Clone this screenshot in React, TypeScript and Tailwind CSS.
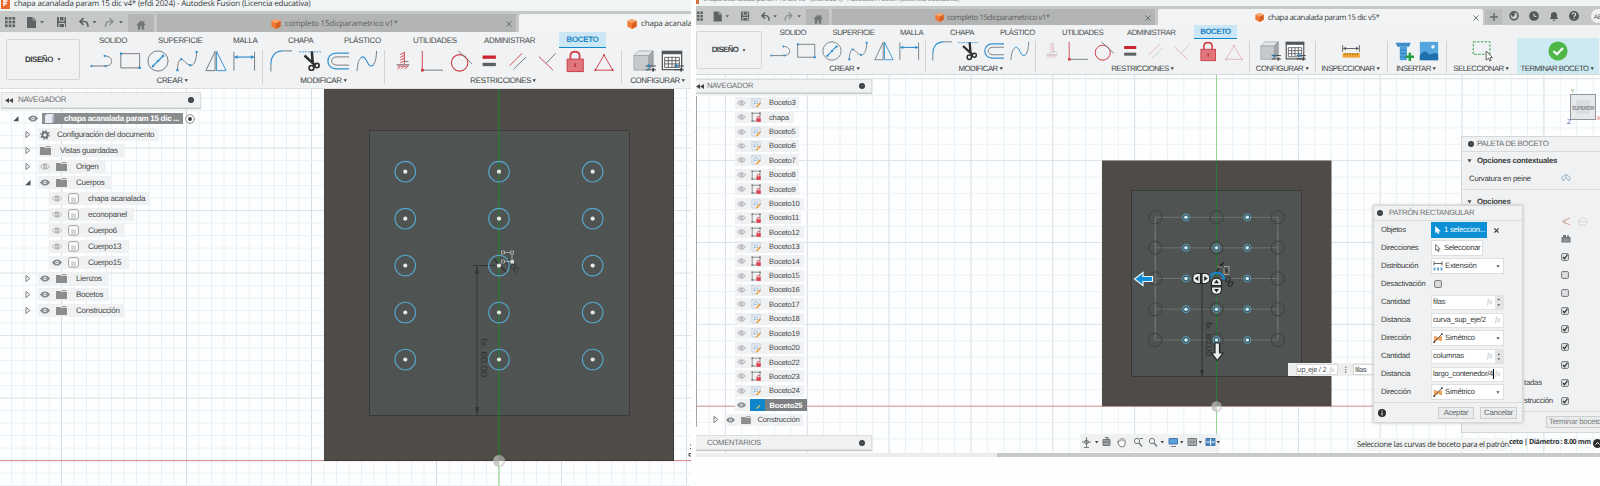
import React from "react";
import type { ReactNode } from "react";

const BLUE = "#2f8fd0";
const GREY = "#6f7275";
const RED = "#cf3a45";

type IconName =
  | "line" | "rect" | "circle" | "spline" | "mirror" | "dim"
  | "fillet" | "trim" | "offset" | "curve"
  | "fix" | "perp" | "tangent" | "equal" | "parallel" | "cross" | "lock" | "triangle"
  | "box" | "table" | "measure" | "bolt" | "image" | "select" | "check";

const drawings: Record<IconName, ReactNode> = {
  line: (
    <>
      <path d="M1 17.5H17C26 17.5 26 6.5 16 6.5" stroke={GREY} />
      <circle cx="1.6" cy="17.5" r="1.2" fill={BLUE} /><circle cx="17" cy="17.5" r="1.2" fill={BLUE} /><circle cx="16" cy="6.5" r="1.2" fill={BLUE} />
    </>
  ),
  rect: (
    <>
      <path d="M2 4H22.5V19.5H2Z" stroke={GREY} />
      <path d="M1 2.8h2.4v2.4H1zM21.3 18.3h2.4v2.4h-2.4z" fill={BLUE} />
    </>
  ),
  circle: (
    <>
      <circle cx="12" cy="12" r="11" stroke={GREY} />
      <path d="M6.5 17.5L17.5 6.5" stroke={BLUE} strokeWidth="1.3" />
      <path d="M5.3 16.4h2.4v2.4H5.3zM10.8 10.8h2.4v2.4h-2.4zM16.3 5.3h2.4v2.4h-2.4z" fill={BLUE} />
    </>
  ),
  spline: (
    <>
      <path d="M1.500 22C2 10 5.500 8 9.500 12.500C16 20 22 18 22.500 2" stroke={GREY} />
      <path d="M.4 20.8h2.4v2.4H.4zM4.500 9h2.200v2.200H4.500zM14.500 15.600h2.200v2.200h-2.200zM21.300 1h2.400v2.400h-2.400z" fill={BLUE} />
    </>
  ),
  mirror: (
    <>
      <path d="M11 1.5V22.5H1Z" stroke={GREY} />
      <path d="M12.6 1.5V22.5H23Z" stroke={BLUE} />
    </>
  ),
  dim: (
    <>
      <path d="M1 2V22.5M23.5 2V22.5" stroke={GREY} />
      <path d="M2 7.7H22.5" stroke={BLUE} strokeWidth="1.3" />
      <path d="M1 7.7l4-2v4zM23.5 7.7l-4-2v4z" fill={BLUE} />
    </>
  ),
  fillet: (
    <>
      <path d="M1 23.5V16M14 1H24" stroke={GREY} />
      <path d="M1 16C1 6 6 1 14 1" stroke={BLUE} strokeWidth="1.3" />
    </>
  ),
  trim: (
    <>
      <path d="M0 2H24" stroke={BLUE} strokeDasharray="2 1.2" />
      <path d="M14 1.5L15 14M6 6L18 17" stroke="#2c2e30" strokeWidth="2.8" />
      <circle cx="13.6" cy="19.5" r="2.6" stroke="#2c2e30" strokeWidth="1.8" />
      <circle cx="19.6" cy="17" r="2.4" stroke="#2c2e30" strokeWidth="1.8" />
    </>
  ),
  offset: (
    <>
      <path d="M24 3.5H10C-2 3.5 -2 20.5 10 20.5H24" stroke={BLUE} strokeWidth="1.4" />
      <path d="M24 7.5H11C3 7.5 3 16.5 11 16.5H24" stroke={GREY} />
    </>
  ),
  curve: (
    <>
      <path d="M1 23C2 16 2 12 5 9M19 16C22 12 22 7 22.5 1" stroke={GREY} />
      <path d="M5 9C9 4 11 12 14 16C16 18 18 18 19 16" stroke={BLUE} strokeWidth="1.2" />
    </>
  ),
  fix: (
    <>
      <path d="M9 5l4-2M9 8l4-2M9 11l4-2M9 14l4-2M6 21l3-3M10 21l3-3M14 21l3-3" stroke={RED} />
      <path d="M13.500 2V15" stroke={RED} />
      <path d="M5 16H19M13 12.5h5" stroke={GREY} />
      <path d="M6 17.6H18" stroke={RED} />
    </>
  ),
  perp: (
    <>
      <path d="M1 22H24" stroke={GREY} />
      <path d="M1.4 1V22" stroke={RED} />
      <rect x="0" y="20.5" width="3" height="3" fill={RED} />
    </>
  ),
  tangent: (
    <>
      <circle cx="10.5" cy="14" r="9" stroke={RED} strokeWidth="1.2" />
      <path d="M9 1L24 15" stroke={GREY} />
    </>
  ),
  equal: (
    <>
      <rect x="5" y="6" width="14.5" height="3.6" fill="#c9252f" />
      <rect x="5" y="14" width="14.5" height="3.6" fill="#5d6063" />
    </>
  ),
  parallel: (
    <>
      <path d="M3 17L16.5 3.5" stroke={RED} />
      <path d="M7 21L21 7.5" stroke={GREY} />
    </>
  ),
  cross: (
    <>
      <path d="M3 7L18.5 22" stroke={RED} />
      <path d="M11 14.5L21.5 3.5" stroke={GREY} />
    </>
  ),
  lock: (
    <>
      <path d="M7 10V6C7 .5 17 .5 17 6V10" stroke="#cf4550" strokeWidth="2" />
      <rect x="3.5" y="10" width="17.5" height="13.5" fill="#e0767c" stroke="#cf4550" strokeWidth="1.2" />
      <path d="M12.2 14.5v4" stroke="#b0202c" strokeWidth="1.3" />
    </>
  ),
  triangle: (
    <>
      <path d="M12 5.5L21.5 22H2.5Z" stroke={RED} />
      <path d="M11 4.5h2v2h-2zM1.5 21h2v2h-2zM20.5 21h2v2h-2z" fill={RED} />
    </>
  ),
  box: (
    <>
      <path d="M1 6L6 1H22L17 6Z" fill="#e3e5e7" stroke="#9b9ea1" strokeWidth=".8" />
      <path d="M17 6L22 1V17L17 22Z" fill="#a4a7aa" stroke="#8b8e91" strokeWidth=".8" />
      <path d="M1 6H17V22H1Z" fill="#c7cacc" stroke="#9b9ea1" strokeWidth=".8" />
      <path d="M14 17.5H25M14 21.5H25" stroke="#45494c" strokeWidth="1.2" />
      <path d="M17 15.5v4" stroke={BLUE} strokeWidth="2" /><path d="M22 19.5v4" stroke="#45494c" strokeWidth="2" />
    </>
  ),
  table: (
    <>
      <path d="M1.5 1.5H22.5V21.5H1.5Z" fill="#fff" stroke="#55585b" strokeWidth="1.4" />
      <path d="M1 1H23V4.6H1Z" fill="#55585b" />
      <path d="M4 8H20V19H4ZM4 11.6H20M4 15.2H20M8 8V19M12 8V19M16 8V19" stroke="#55585b" />
      <path d="M14 17.5H25M14 21.5H25" stroke="#45494c" strokeWidth="1.2" />
      <path d="M17 15.5v4" stroke={BLUE} strokeWidth="2" /><path d="M22 19.5v4" stroke="#45494c" strokeWidth="2" />
    </>
  ),
  measure: (
    <>
      <path d="M2 5V13M22 5V13M3 9H21" stroke="#55585b" strokeWidth="1.1" />
      <path d="M2.5 9l3.5-2v4zM21.5 9l-3.5-2v4z" fill="#55585b" />
      <rect x="2" y="14.5" width="20.5" height="5.5" fill="#efa434" />
      <path d="M5 14.5v2.5M8 14.5v2.5M11 14.5v2.5M14 14.5v2.5M17 14.5v2.5M20 14.5v2.5" stroke="#9c6412" />
    </>
  ),
  bolt: (
    <>
      <path d="M2 2H20L18 7H4Z" fill="#3b8cc8" />
      <path d="M7 7H15.5V23H7Z" fill="#4c9fdb" />
      <path d="M7 11H15.5M7 15H15.5M7 19H15.5" stroke="#2f78b4" strokeWidth=".8" />
      <path d="M19 14V24M14 19H24" stroke="#27a042" strokeWidth="3" />
    </>
  ),
  image: (
    <>
      <path d="M1 1H23V23H1Z" fill="#54a7de" />
      <path d="M1 18C5 11 8 12 11 15C15 19 17 11 23 16V23H1Z" fill="#1f6fac" />
      <circle cx="16.8" cy="7" r="2.2" fill="#e9f5fc" />
    </>
  ),
  select: (
    <>
      <path d="M1.5 1H21.5V16H1.5Z" stroke="#3aa34e" strokeDasharray="3 1.6" strokeWidth="1.2" />
      <path d="M17 12V23L19.6 20.6L21.4 24L23 23.2L21.4 20H24.6Z" fill="#fff" stroke="#333" strokeWidth=".9" />
    </>
  ),
  check: (
    <>
      <circle cx="12" cy="12" r="11.5" fill="#4fb648" />
      <path d="M6.5 12L10.7 16L18 8.5" stroke="#fff" strokeWidth="2.6" />
    </>
  ),
};

function Icon({ name, className }: { name: IconName; className: string }) {
  return (
    <svg viewBox="0 0 24 24" fill="none" className={`overflow-visible ${className}`}>
      {drawings[name]}
    </svg>
  );
}

function Caret({ className = "h-[4px] w-[5px]" }: { className?: string }) {
  return (
    <svg viewBox="0 0 5 4" className={`shrink-0 ${className}`}>
      <path d="M0.5 0.3H4.5L2.5 3.5Z" fill="#444" />
    </svg>
  );
}

function Cube({ className }: { className: string }) {
  return (
    <svg viewBox="0 0 10 10" className={`shrink-0 ${className}`}>
      <path d="M5 0L9.6 2V7.6L5 10L.4 7.6V2Z" fill="#ee7a35" />
      <path d="M5 0L9.6 2L5 4.2L.4 2Z" fill="#f9a96e" />
      <path d="M5 4.2L9.6 2V7.6L5 10Z" fill="#d95f20" />
    </svg>
  );
}

function QuickAccess({ className }: { className: string }) {
  return (
    <svg viewBox="0 0 128 20" className={`shrink-0 ${className}`} fill="none">
      <g fill="#606365">
        {[5, 8.7, 12.4].map((x) => [5, 8.7, 12.4].map((y) => <rect key={`${x}${y}`} x={x} y={y} width="2.7" height="2.7" />))}
        <path d="M27 5H33L36 8V16H27Z" />
        <path d="M40 9h4l-2 2.600zM92.500 9h4l-2 2.600zM119 9h4l-2 2.600z" />
        <path d="M57 5H66V15H57Z" />
      </g>
      <path d="M33 5V8H36" stroke="#c8caca" strokeWidth=".7" />
      <path d="M59.500 5V9H64V5M59 15V11.500H64.500V15" stroke="#c8caca" strokeWidth="1" />
      <path d="M83.500 6L80 9.500L83.500 13M80.500 9.500H84C87 9.500 88 12 88 15" stroke="#5d6062" strokeWidth="1.6" />
      <path d="M109.500 6L113 9.500L109.500 13M112.500 9.500H109C106.500 9.500 105.500 12 105.500 15" stroke="#8e9193" strokeWidth="1.5" />
    </svg>
  );
}

function Home({ className }: { className: string }) {
  return (
    <div className={`flex shrink-0 items-center justify-center rounded-t-[2px] bg-[#b4b6b6] ${className}`}>
      <svg viewBox="0 0 10 10" className="mt-[3px] size-[10px]">
        <path d="M5 .5L.3 5H1.800V9.800H4.200V6.500H5.800V9.800H8.200V5H9.700L8.300 3.600V1H7V2.400Z" fill="#737577" />
      </svg>
    </div>
  );
}

function Close({ className }: { className: string }) {
  return (
    <svg viewBox="0 0 7 7" className={`size-[6px] shrink-0 ${className}`}>
      <path d="M.5 .5L6.500 6.500M6.500 .5L.5 6.500" stroke="#606365" strokeWidth="1" />
    </svg>
  );
}

function Dot({ className = "" }: { className?: string }) {
  return (
    <svg viewBox="0 0 6 6" className={`size-[6px] shrink-0 ${className}`}>
      <circle cx="3" cy="3" r="3" fill="#3c3f41" />
      <path d="M1.500 3H4.500" stroke="#777" strokeWidth=".7" />
    </svg>
  );
}

function Design({ className }: { className: string }) {
  return (
    <div className={`flex shrink-0 items-center justify-center rounded-[2px] border border-[#d3d5d6] bg-[#eff1f2] font-bold text-[#404345] ${className}`}>
      <span>DISEÑO</span>
      <Caret className="ml-[4px] h-[3px] w-[4px]" />
    </div>
  );
}

const tabNames = ["SOLIDO", "SUPERFICIE", "MALLA", "CHAPA", "PLÁSTICO", "UTILIDADES", "ADMINISTRAR"];

function Tabs({ className, activeClass }: { className: string; activeClass: string }) {
  return (
    <div className={`grid items-start whitespace-nowrap text-[#4a4d4f] ${className}`}>
      {tabNames.map((t) => (
        <span key={t}>{t}</span>
      ))}
      <span className={`flex items-center justify-center border-b-[1.500px] border-[#1087cc] bg-[#cbe7f5] font-bold text-[#1a84c4] ${activeClass}`}>
        BOCETO
      </span>
    </div>
  );
}

function Group({
  icons, label, cell, icon, dim = [], className = "", labelClass = "pt-[3px]",
}: {
  icons: IconName[]; label: string; cell: string; icon: string; dim?: IconName[]; className?: string; labelClass?: string;
}) {
  return (
    <div className={`flex shrink-0 flex-col items-center ${className}`}>
      <div className="flex justify-center">
        {icons.map((n) => (
          <span key={n} className={`flex justify-center ${cell} ${dim.includes(n) ? "opacity-35" : ""}`}>
            <Icon name={n} className={icon} />
          </span>
        ))}
      </div>
      <div className={`flex items-center gap-[1.500px] whitespace-nowrap text-[#3f4244] ${labelClass}`}>
        {label}
        <Caret className="h-[3.500px] w-[4.500px]" />
      </div>
    </div>
  );
}

function Sep({ className }: { className: string }) {
  return <div className={`w-px shrink-0 bg-[#d0d2d3] ${className}`} />;
}

const create: IconName[] = ["line", "rect", "circle", "spline", "mirror", "dim"];
const modify: IconName[] = ["fillet", "trim", "offset", "curve"];
const constrain: IconName[] = ["fix", "perp", "tangent", "equal", "parallel", "cross", "lock", "triangle"];

/* ---------- tree ---------- */

function Eye({ on, className = "h-[7px] w-[10px]" }: { on: boolean; className?: string }) {
  return (
    <svg viewBox="0 0 10 7" className={`shrink-0 ${className}`} fill="none">
      {on ? (
        <>
          <path d="M0 3.500C2.500-.6 7.500-.6 10 3.500C7.500 7.600 2.500 7.600 0 3.500Z" fill="#85888a" />
          <circle cx="5" cy="3.500" r="1.700" fill="#f0f1f2" />
          <circle cx="5" cy="3.500" r=".8" fill="#85888a" />
        </>
      ) : (
        <>
          <path d="M.4 3.500C2.700 .1 7.300 .1 9.600 3.500C7.300 6.900 2.700 6.900 .4 3.500Z" stroke="#9a9c9e" strokeWidth=".8" />
          <circle cx="5" cy="3.500" r="1.700" stroke="#9a9c9e" strokeWidth=".8" />
          <path d="M3.200 1.200L6.800 5.800" stroke="#9a9c9e" strokeWidth=".7" />
        </>
      )}
    </svg>
  );
}

function Folder({ className = "h-[9px] w-[11px]" }: { className?: string }) {
  return (
    <svg viewBox="0 0 11 9" className={`shrink-0 ${className}`}>
      <path d="M0 1H4.500L5.200 2H11V9H0Z" fill="#8b8d8e" />
      <path d="M5.500 .3H10.500V1.200H6Z" fill="#8b8d8e" />
    </svg>
  );
}

function Expander({ open, className = "" }: { open: boolean; className?: string }) {
  return (
    <svg viewBox="0 0 6 7" className={`h-[7px] w-[6px] shrink-0 ${className}`}>
      {open ? (
        <path d="M5.500 1V6.300H.2Z" fill="#4d5052" />
      ) : (
        <path d="M1 .5L4.800 3.500L1 6.500Z" fill="#fff" stroke="#5a5d5f" strokeWidth=".8" />
      )}
    </svg>
  );
}

function Body() {
  return (
    <svg viewBox="0 0 11 11" className="ml-[6px] size-[11px] shrink-0">
      <rect x=".6" y=".6" width="9.800" height="9.600" rx="2" fill="#fbfbfb" stroke="#8b8e90" strokeWidth=".8" />
      <rect x="3" y="4.500" width="5" height="5" fill="#d4d6d8" />
    </svg>
  );
}

function SketchIcon({ locked }: { locked: boolean }) {
  return locked ? (
    <svg viewBox="0 0 10 10" className="size-[10px] shrink-0" fill="none">
      <path d="M1.200 9V1.200H9V5M1.200 9H5" stroke="#6c6f71" strokeWidth=".7" />
      <path d="M.4 .4h1.600v1.600H.4zM8.200 .4h1.600v1.600H8.200zM.4 8.200h1.600v1.600H.4z" fill="#6c6f71" />
      <path d="M6.300 6.500V5.500C6.300 4 8.900 4 8.900 5.500V6.500" stroke="#d2343f" strokeWidth=".9" />
      <rect x="5.400" y="6.300" width="4.400" height="3.600" fill="#d9434d" />
    </svg>
  ) : (
    <svg viewBox="0 0 10 10" className="size-[10px] shrink-0" fill="none">
      <path d="M.8 .8H9.200V5M.8 .8V9H5" stroke="#9fb9d2" strokeWidth=".7" strokeDasharray="1.500 .6" />
      <path d="M3 7V3H6.500V5.500H3" stroke="#8fb2d6" strokeWidth=".7" />
      <path d="M5.300 9.200L9 5.300" stroke="#eda13d" strokeWidth="1.600" />
      <path d="M8.400 5.900L9.500 4.800" stroke="#d98a61" strokeWidth="1.400" />
    </svg>
  );
}

type Node = { label: string; on: boolean; open?: boolean; kind: "gear" | "views" | "folder" | "body"; w: string };

const nodes: Node[] = [
  { label: "Configuración del documento", on: true, open: false, kind: "gear", w: "w-[121px]" },
  { label: "Vistas guardadas", on: true, open: false, kind: "views", w: "w-[86px]" },
  { label: "Origen", on: false, open: false, kind: "folder", w: "w-[68px]" },
  { label: "Cuerpos", on: true, open: true, kind: "folder", w: "w-[74px]" },
  { label: "chapa acanalada", on: false, kind: "body", w: "w-[101px]" },
  { label: "econopanel", on: false, kind: "body", w: "w-[85px]" },
  { label: "Cuerpo6", on: false, kind: "body", w: "w-[75px]" },
  { label: "Cuerpo13", on: false, kind: "body", w: "w-[80px]" },
  { label: "Cuerpo15", on: true, kind: "body", w: "w-[80px]" },
  { label: "Lienzos", on: true, open: false, kind: "folder", w: "w-[71px]" },
  { label: "Bocetos", on: true, open: false, kind: "folder", w: "w-[71px]" },
  { label: "Construcción", on: true, open: false, kind: "folder", w: "w-[86px]" },
];

function TreeRow({ node }: { node: Node }) {
  const body = node.kind === "body";
  return (
    <div className="flex h-[16px] items-center pl-[24px]">
      {!body && <Expander open={!!node.open} />}
      <div className={`flex h-[13px] items-center whitespace-nowrap bg-[#f0f1f2] ${node.w} ${body ? "ml-[24px] pl-[3px]" : "ml-[7px] pl-[2px]"}`}>
        {node.kind === "gear" && (
          <svg viewBox="0 0 10 10" className="mr-[7px] size-[10px] shrink-0" fill="none">
            <circle cx="5" cy="5" r="2.600" stroke="#686b6d" strokeWidth="1.600" />
            <circle cx="5" cy="5" r="4.100" stroke="#686b6d" strokeWidth="1.300" strokeDasharray="1.600 1.600" />
          </svg>
        )}
        {node.kind === "views" && <Folder className="mr-[9px] h-[9px] w-[11px]" />}
        {node.kind === "folder" && (<><Eye on={node.on} /><Folder className="ml-[6px] mr-[9px] h-[9px] w-[11px]" /></>)}
        {body && (<><Eye on={node.on} /><Body /></>)}
        <span className={body ? "pl-[9px]" : ""}>{node.label}</span>
      </div>
    </div>
  );
}

function PanelHeader({ title, className, lead, arrows }: { title: string; className: string; lead: string; arrows?: boolean }) {
  return (
    <div className={`flex shrink-0 items-center border border-[#dcdedf] bg-[#f0f1f2] shadow-[0_1px_1px_#c8caca] ${className}`}>
      <span className={`flex shrink-0 items-center ${lead}`}>
        {arrows && (
          <svg viewBox="0 0 8 5" className="h-[5px] w-[8px]"><path d="M4 0V5L0 2.500ZM8 0V5L4 2.500Z" fill="#444" /></svg>
        )}
      </span>
      <span className="flex-1 text-[#6b6e70]">{title}</span>
      <Dot className="mr-[6px]" />
    </div>
  );
}

/* ---------- canvas ---------- */

function Grid({ x0, y0, step, majorX, left, right, top, bottom }: {
  x0: number; y0: number; step: number; majorX: number; left: number; right: number; top: number; bottom: number;
}) {
  const out: ReactNode[] = [];
  for (let k = Math.ceil((left - x0) / step); x0 + k * step < right; k++) {
    const x = x0 + k * step;
    out.push(<path key={`v${k}`} d={`M${x} ${top}V${bottom}`} stroke={k % majorX === 0 ? "#d9dcdf" : "#edf0f2"} />);
  }
  for (let k = Math.ceil((top - y0) / step); y0 + k * step < bottom; k++) {
    const y = y0 + k * step;
    out.push(<path key={`h${k}`} d={`M${left} ${y}H${right}`} stroke={k % 5 === 0 ? "#dde1e3" : "#eef1f3"} />);
  }
  return <g>{out}</g>;
}

function Origin({ x, y, r }: { x: number; y: number; r: number }) {
  return (
    <g>
      <circle cx={x} cy={y} r={r} fill="#b9bbb9" fillOpacity=".75" />
      <path d={`M${x} ${y}V${y - r}A${r} ${r} 0 0 1 ${x + r} ${y}Z`} fill="#8a8886" fillOpacity=".6" />
      <path d={`M${x} ${y}H${x + r - 1.2}A${r - 1.2} ${r - 1.2} 0 0 1 ${x} ${y + r - 1.2}Z`} fill="#f4f5f4" />
    </g>
  );
}

function LeftCanvas() {
  return (
    <svg viewBox="0 89 691 397" className="absolute inset-0 h-[397px] w-[691px]" fill="none">
      <rect x="0" y="89" width="691" height="397" fill="#fdfeff" />
      <Grid x0={61.5} y0={460.6} step={12.5} majorX={10} left={0} right={691} top={89} bottom={486} />
      <path d="M0 460.600H691" stroke="#dd8585" />
      <path d="M499 461V486" stroke="#a9dba4" strokeWidth="1.500" />
      <rect x="324" y="89" width="350" height="372" fill="#4f4b46" />
      <path d="M673.500 89V461M324 460.500H674" stroke="#3b3a3a" />
      <rect x="369.500" y="130.500" width="260" height="285" fill="#4f5452" stroke="#383b3b" />
      <path d="M499 89V461" stroke="#257b34" strokeWidth="1.300" />
      <path d="M473 265.500H495M477 266V415" stroke="#333738" />
      <path d="M477 266l-2.200 8h4.400zM477 415l-2.200-8h4.400z" fill="#333738" />
      <text transform="translate(481 338) rotate(90)" fontSize="9" fill="#2f3333" textLength="39" lengthAdjust="spacingAndGlyphs" fontFamily="Liberation Sans, sans-serif">fx: 60.00</text>
      <text transform="translate(504 262) rotate(45)" fontSize="9" fill="#2f3333" fontFamily="Liberation Sans, sans-serif">8.00</text>
      <path d="M494 259l12 13" stroke="#2f3333" strokeWidth="1.500" />
      {[405.3, 499, 592.7].map((x) =>
        [171.7, 218.7, 265.6, 312.5, 359.5].map((y) => (
          <g key={`${x}-${y}`}>
            <circle cx={x} cy={y} r="10.300" stroke="#56a5cb" strokeWidth="1.100" />
            <circle cx={x} cy={y} r="2.100" fill="#e8e8e6" />
          </g>
        )),
      )}
      <path d="M503 252.500H512V261.500H503" stroke="#b5b7b6" strokeWidth=".8" />
      <path d="M501.500 251h3v3h-3zM510.500 251h3v3h-3zM501.500 260h3v3h-3z" fill="#4f5452" stroke="#c9cac9" strokeWidth=".7" />
      <rect x="510.500" y="260" width="3.500" height="3.500" fill="#d9dad9" />
      <Origin x={499} y={461} r={6} />
      <path d="M691 453.500H689V456H691M690 448.500h1M690 445h1" stroke="#444" />
    </svg>
  );
}

const cols = [1155.3, 1186, 1216.5, 1247.3, 1277.8];
const rows = [217.3, 247.8, 278.5, 309.2, 340];

function RightCanvas() {
  return (
    <svg viewBox="696 75 904 378" className="absolute inset-0 h-[378px] w-[904px]" fill="none">
      <rect x="696" y="75" width="904" height="378" fill="#fdfeff" />
      <Grid x0={725.4} y0={406.2} step={16.37} majorX={5} left={696} right={1600} top={75} bottom={453} />
      <path d="M696 406.200H1461" stroke="#d99" />
      <path d="M1216.500 75V161M1216.500 406V435" stroke="#96d394" />
      <rect x="1102" y="160.500" width="229.500" height="245.800" fill="#4f4b46" />
      <rect x="1131.500" y="190.500" width="170" height="186" fill="#4f5452" stroke="#363939" />
      <path d="M1216.500 161V406" stroke="#257b34" />
      <g stroke="#6d7271">
        {rows.map((y) => <path key={y} d={`M1155.300 ${y}H1277.800`} />)}
        <path d="M1155.300 217.300V340M1277.800 217.300V340" strokeWidth="1.400" />
      </g>
      <path d="M1202 280V376" stroke="#2f3333" />
      <path d="M1202 376l-2-6h4z" fill="#2f3333" />
      <text transform="translate(1205.500 322) rotate(90)" fontSize="8" fill="#2a2d2d" textLength="34" lengthAdjust="spacingAndGlyphs" fontFamily="Liberation Sans, sans-serif">fx: 60.00</text>
      {[1155.3, 1216.5, 1277.8].map((x) => rows.map((y) => <circle key={`${x}-${y}`} cx={x} cy={y} r="6.600" stroke="#3b3f3f" />))}
      {cols.slice(1, 4).map((x) =>
        rows.map((y) =>
          x === 1216.5 && (y === 217.3 || y === 278.5) ? null : (
            <g key={`${x}-${y}`}>
              <circle cx={x} cy={y} r="3.500" fill="#34545f" stroke="#62a5bf" strokeWidth=".9" />
              <circle cx={x} cy={y} r="1.800" fill="#d5edf5" />
            </g>
          ),
        ),
      )}
      <path d="M1220 264l10 10M1224 262l-8 10" stroke="#26292a" strokeWidth="1.300" />
      <path d="M1217.500 267h5M1224 266.500h5v8h-5z" stroke="#b9b3a8" strokeWidth=".8" />
      <g stroke="#26292a" strokeWidth="1.100">
        <ellipse cx="1228" cy="279.500" rx="1.800" ry="2.800" transform="rotate(45 1228 279.500)" />
        <ellipse cx="1230.500" cy="284" rx="1.800" ry="2.800" transform="rotate(45 1230.500 284)" />
      </g>
      <path d="M1209.500 280A7.200 7.200 0 0 1 1224 280" stroke="#1787d2" strokeWidth="2.200" />
      <path d="M1134.500 279L1143 272.500V276.500H1152.500V281.500H1143V285.500Z" fill="#0f8fd8" stroke="#e6f2f8" strokeWidth="1.200" />
      <g fill="#eceeee" stroke="#222526" strokeWidth="1.200">
        <path d="M1200.500 273.500V283.500H1197.500C1191 283.500 1191 273.500 1197.500 273.500Z" />
        <path d="M1202 273.500V283.500H1205C1211.500 283.500 1211.500 273.500 1205 273.500Z" />
        <path d="M1211.500 285.500H1221.500V283C1221.500 276.500 1211.500 276.500 1211.500 283Z" />
        <path d="M1211.500 287H1221.500V289.500C1221.500 296 1211.500 296 1211.500 289.500Z" />
        <path d="M1215 343H1219.500V353H1223L1217.300 360.500L1211.500 353H1215Z" />
      </g>
      <path d="M1194.700 278.500l3.600-2.500v5zM1207.800 278.500l-3.600-2.500v5zM1216.500 279.800l-2.500 3.400h5zM1216.500 292.500l-2.500-3.400h5z" fill="#222526" />
      <Origin x={1216.5} y={406.5} r={5.3} />
      {/* view cube */}
      <rect x="1570.500" y="94.500" width="25" height="25" fill="#e6e8ea" stroke="#93979a" />
      <rect x="1576" y="100" width="14" height="14" fill="#dadde0" />
      <text x="1572" y="109.800" fontSize="6" fontWeight="bold" fill="#84888c" textLength="22" lengthAdjust="spacingAndGlyphs" fontFamily="Liberation Sans, sans-serif">SUPERIOR</text>
      <text x="1570.500" y="93" fontSize="6" fill="#74b765" fontFamily="Liberation Sans, sans-serif">Y</text>
      <text x="1567" y="123.500" fontSize="6.500" fill="#5b5bb5" fontFamily="Liberation Sans, sans-serif">Z</text>
      <text x="1596.500" y="119.500" fontSize="6" fill="#dd6a6a" fontFamily="Liberation Sans, sans-serif">X</text>
    </svg>
  );
}

/* ---------- right window panels ---------- */

const sketches: [string, boolean, string][] = [
  ["Boceto3", false, "w-[64px]"], ["chapa", true, "w-[59px]"], ["Boceto5", false, "w-[64px]"], ["Boceto6", false, "w-[64px]"],
  ["Boceto7", false, "w-[64px]"], ["Boceto8", true, "w-[64px]"], ["Boceto9", true, "w-[64px]"], ["Boceto10", false, "w-[69px]"],
  ["Boceto11", true, "w-[66px]"], ["Boceto12", true, "w-[69px]"], ["Boceto13", false, "w-[69px]"], ["Boceto14", true, "w-[69px]"],
  ["Boceto15", true, "w-[69px]"], ["Boceto16", false, "w-[69px]"], ["Boceto17", false, "w-[69px]"], ["Boceto18", false, "w-[69px]"],
  ["Boceto19", false, "w-[69px]"], ["Boceto20", false, "w-[69px]"], ["Boceto22", true, "w-[69px]"], ["Boceto23", true, "w-[69px]"],
  ["Boceto24", false, "w-[69px]"],
];

function Fx() {
  return <span className="font-['Liberation_Serif',serif] text-[7.500px] italic text-[#b2b5b7]">fx</span>;
}

function CheckBox({ on }: { on: boolean }) {
  return (
    <svg viewBox="0 0 8 8" className="size-[8px] shrink-0" fill="none">
      <rect x=".6" y=".6" width="6.800" height="6.800" rx="1" fill={on ? "#e6e8e9" : "#dcdedf"} stroke="#66696b" strokeWidth=".9" />
      {on && <path d="M2 4L3.500 5.700L6.500 1.500" stroke="#2b2d2e" strokeWidth="1.200" />}
    </svg>
  );
}

function Pointer({ color, fill }: { color: string; fill: string }) {
  return (
    <svg viewBox="0 0 6 8" className="h-[8px] w-[6px] shrink-0">
      <path d="M.6 .6V6.500L2 5.300L3 7.600L4 7.200L3.200 5H5.200Z" fill={fill} stroke={color} strokeWidth=".7" />
    </svg>
  );
}

function Field({ label, children }: { label: string; children: ReactNode }) {
  return (
    <div className="flex h-[18.050px] items-center whitespace-nowrap">
      <span className="w-[50px] shrink-0">{label}</span>
      {children}
    </div>
  );
}

function TextField({ value, spin, cursor }: { value: string; spin?: boolean; cursor?: boolean }) {
  return (
    <div className="flex h-[15px] w-[73px] border border-[#e0e2e3] bg-white">
      <div className="flex flex-1 items-center justify-between pl-[1px] pr-[3px]">
        <span className={cursor ? "border-r border-black tracking-[-0.350px]" : ""}>{value}</span>
        <Fx />
      </div>
      {spin && (
        <div className="flex w-[8px] flex-col items-center justify-evenly bg-[#e1e3e4]">
          <Caret className="h-[2.500px] w-[3.500px] rotate-180" />
          <Caret className="h-[2.500px] w-[3.500px]" />
        </div>
      )}
    </div>
  );
}

function Combo({ value, icon }: { value: string; icon: ReactNode }) {
  return (
    <div className="flex h-[16px] w-[73px] items-center border border-[#dcdedf] bg-white pl-[1px] pr-[3px]">
      {icon}
      <span className="flex-1 pl-[2px]">{value}</span>
      <Caret className="h-[3px] w-[4px]" />
    </div>
  );
}

function Symmetric() {
  return (
    <svg viewBox="0 0 10 10" className="size-[10px] shrink-0">
      <path d="M1 2.500L5 4.500L9 3V8.500L5 7L1 9.500Z" fill="#f0a35c" />
      <path d="M1 9.200L9 1" stroke="#4c4f51" strokeWidth=".9" />
      <circle cx="9" cy="1.200" r=".9" fill="#333" /><circle cx="1.200" cy="9" r=".9" fill="#333" />
    </svg>
  );
}

function Extent() {
  return (
    <svg viewBox="0 0 10 10" className="size-[10px] shrink-0" fill="none">
      <path d="M1 .5V4.500M9 .5V4.500M1 2.500H9" stroke="#55585a" strokeWidth=".9" />
      <path d="M.5 6.500h2v3h-2zM4 6.500h2v3H4zM7.500 6.500h2v3h-2z" fill="#6aa9d6" />
    </svg>
  );
}

function PatternDialog() {
  return (
    <div className="absolute left-[677px] top-[130px] flex h-[218px] w-[150px] flex-col border border-[#d5d7d8] bg-[#f0f1f2] text-[7.700px] tracking-[-0.250px] text-[#3b3e40] shadow-[0_0_3px_#bbbdbf]">
      <div className="flex h-[15px] items-center gap-[6px] border-b border-[#d9dbdc] pl-[3px] tracking-[-0.300px] text-[#6b6e70]">
        <Dot />PATRÓN RECTANGULAR
      </div>
      <div className="flex flex-1 flex-col pl-[7px]">
        <Field label="Objetos">
          <div className="flex h-[16px] w-[56px] shrink-0 items-center gap-[3px] bg-[#0b90d6] pl-[4px] text-white"><Pointer color="#fff" fill="#fff" />1 seleccion...</div>
          <svg viewBox="0 0 6 6" className="ml-[7px] size-[5px]"><path d="M.5 .5L5.500 5.500M5.500 .5L.5 5.500" stroke="#333" strokeWidth="1.300" /></svg>
        </Field>
        <Field label="Direcciones">
          <div className="flex h-[16px] w-[52px] items-center gap-[3px] border border-[#dcdedf] bg-white pl-[3px] tracking-[-0.350px]"><Pointer color="#444" fill="#fff" />Seleccionar</div>
        </Field>
        <Field label="Distribución"><Combo value="Extensión" icon={<Extent />} /></Field>
        <Field label="Desactivación"><span className="pl-[3px]"><CheckBox on={false} /></span></Field>
        <Field label="Cantidad"><TextField value="filas" spin /></Field>
        <Field label="Distancia"><TextField value="curva_sup_eje/2" /></Field>
        <Field label="Dirección"><Combo value="Simétrico" icon={<Symmetric />} /></Field>
        <Field label="Cantidad"><TextField value="columnas" spin /></Field>
        <Field label="Distancia"><TextField value="largo_contenedor/4" cursor /></Field>
        <Field label="Dirección"><Combo value="Simétrico" icon={<Symmetric />} /></Field>
      </div>
      <div className="flex h-[20px] items-center border-t border-[#d9dbdc] pl-[4px] text-[#66696b]">
        <svg viewBox="0 0 8 8" className="size-[8px]"><circle cx="4" cy="4" r="4" fill="#2b2d2e" /><path d="M4 1.500V2.600M4 3.400V6.400" stroke="#fff" strokeWidth="1" /></svg>
        <span className="ml-[52px] flex h-[12px] w-[36px] items-center justify-center border border-[#cccecf] bg-[#e9ebec]">Aceptar</span>
        <span className="ml-[6px] flex h-[12px] w-[37px] items-center justify-center border border-[#cccecf] bg-[#e9ebec]">Cancelar</span>
      </div>
    </div>
  );
}

const options: [string, boolean][] = [
  ["", true], ["", false], ["", false], ["", true], ["", true], ["", true], ["", true], ["tadas", true], ["strucción", true],
];

function Palette() {
  return (
    <div className="absolute left-[765px] top-[61px] flex h-[297px] w-[150px] flex-col border border-[#d5d7d8] bg-[#f0f1f2] text-[7.800px] tracking-[-0.250px] text-[#3b3e40]">
      <div className="flex h-[15px] items-center gap-[3px] border-b border-[#d9dbdc] pl-[6px] tracking-[-0.300px] text-[#6b6e70]"><Dot />PALETA DE BOCETO</div>
      <div className="flex h-[17px] items-center gap-[5px] pl-[5px] font-bold"><Caret />Opciones contextuales</div>
      <div className="flex h-[21px] items-start border-b border-[#d9dbdc] pl-[7px] pt-[5px]">
        <span className="w-[92px]">Curvatura en peine</span>
        <svg viewBox="0 0 10 8" className="h-[8px] w-[10px]" fill="none"><path d="M.8 5C2 -.5 8 -.5 9.200 5M2.500 7C3.500 3.500 6.500 3.500 7.500 7M.8 5L2.500 7M9.200 5L7.500 7M5 1V4.300" stroke="#8fa9c4" strokeWidth=".9" /></svg>
      </div>
      <div className="flex h-[24px] items-center gap-[5px] pl-[5px] font-bold"><Caret />Opciones</div>
      <div className="flex h-[14px] items-center gap-[7px] pl-[99px]">
        <svg viewBox="0 0 10 9" className="h-[9px] w-[10px]" fill="none"><path d="M9 1L1 4.500L9 8" stroke="#e0a58c" /><path d="M4 2.500V6.500" stroke="#a8b7a5" /></svg>
        <svg viewBox="0 0 10 9" className="h-[9px] w-[10px]" fill="none"><path d="M1 8V3L3 1H7L9 3V6L7 8ZM1 4.500H9" stroke="#dcd9d5" /></svg>
      </div>
      <div className="flex h-[20px] items-center pl-[99px]">
        <svg viewBox="0 0 10 9" className="h-[9px] w-[10px]"><path d="M.5 3H9.500V8.500H.5Z" fill="#70747b" /><path d="M2 1H5V3H2ZM6 1.500H8V3H6Z" fill="#70747b" /><path d="M2 5H8M2 6.800H8" stroke="#c6cad0" strokeWidth=".6" /></svg>
      </div>
      <div className="flex flex-1 flex-col">
        {options.map(([label, on], i) => (
          <div key={i} className="flex h-[18px] items-center pl-[62px]">
            <span className="w-[37px]">{label}</span>
            <CheckBox on={on} />
          </div>
        ))}
      </div>
      <div className="flex h-[21px] items-center border-t border-[#d9dbdc] pl-[84px] text-[#7b7e80]">
        <span className="flex h-[12px] w-[60px] items-center whitespace-nowrap border border-[#cccecf] bg-[#e9ebec] pl-[2px]">Terminar boceto</span>
      </div>
    </div>
  );
}

function NavBar() {
  return (
    <div className="absolute left-[384px] top-[359px] h-[18px] w-[140px] bg-[#f0f1f2]">
      <svg viewBox="1080 434 140 18" className="h-[18px] w-[140px]" fill="none" stroke="#6c6f71" strokeWidth=".9">
        <path d="M1086.500 437V447M1082 442H1091M1084 447.500h5" /><circle cx="1086.500" cy="442" r="2" />
        <path d="M1103 439.500h7v6h-7zM1103 442h7M1105 437.500h3v2" fill="#9da0a2" />
        <path d="M1119 442v-2.500M1121 441v-3M1123 441v-3M1125 442v-2.500M1119 442l-1.500-.5l2 4.500q2.500 2 5 0l.8-4" fill="#fff" />
        <circle cx="1137" cy="441" r="2.700" /><path d="M1139 443l3 3.500M1140 438.500h3" strokeWidth="1.200" />
        <circle cx="1152" cy="441" r="2.700" /><path d="M1154 443l3 3.500" strokeWidth="1.200" />
        <path d="M1169 438.500h8.500v5.500h-8.500z" fill="#5b9fd8" stroke="#3a6fa8" /><path d="M1171 446.500h5" />
        <path d="M1188 438.500h8.500v7h-8.500z" fill="#b4b7b9" /><path d="M1190.800 438.500v7M1193.600 438.500v7M1188 442h8.500" strokeWidth=".6" />
        <path d="M1206 438.500h9v7h-9z" fill="#4b86c4" stroke="#3a6fa8" /><path d="M1210.500 438.500v7M1206 442h9" stroke="#fff" />
        <path d="M1095 441h3.500l-1.750 2.500zM1160.500 441h3.500l-1.750 2.500zM1180 441h3.500l-1.750 2.500zM1198.500 441h3.500l-1.750 2.500zM1216.500 441h3.500l-1.750 2.500z" fill="#444" stroke="none" />
      </svg>
    </div>
  );
}

function LeftWindow() {
  const cell = "w-[28.700px]";
  const icon = "size-[22px]";
  const label = "pt-[4px] tracking-[-0.400px]";
  return (
    <section className="flex h-[486px] w-[691px] shrink-0 flex-col overflow-hidden text-[8px] leading-[10px] tracking-[-0.250px]">
      <header className="flex h-[11px] shrink-0 items-start bg-[#f1f4f5]">
        <svg viewBox="0 0 9 9" className="ml-px h-[9px] w-[9px] shrink-0"><path d="M0 0H9V9H0Z" fill="#e8692c" /><path d="M3 0V6M3 1H6.500M3 3.500H6" stroke="#fff" strokeWidth="1.400" /></svg>
        <h1 className="-mt-[1px] ml-[4px] whitespace-nowrap font-['Open_Sans',sans-serif] text-[8px] leading-[10px] tracking-[-0.190px] text-[#35383a]">
          chapa acanalada param 15 dic v4* (efdi 2024) - Autodesk Fusion (Licencia educativa)
        </h1>
      </header>
      <nav className="flex h-[21px] shrink-0 items-end bg-[#c6c8c8]">
        <QuickAccess className="h-[20px] w-[128px]" />
        <Home className="h-[18px] w-[26px]" />
        <div className="ml-[3px] flex h-[18px] w-[359px] shrink-0 items-center bg-[#b3b5b5] pl-[114px] pt-px font-['Open_Sans',sans-serif] tracking-[-0.180px] text-[#5d6062]">
          <Cube className="size-[10px]" />
          <span className="ml-[4px] whitespace-nowrap">completo 15dicparametrico v1*</span>
          <Close className="ml-auto mr-[4px]" />
        </div>
        <div className="ml-[3px] flex h-[18px] flex-1 items-center overflow-hidden rounded-tl-[2px] bg-[#f1f3f4] pl-[108px] pt-px font-['Open_Sans',sans-serif] tracking-[-0.180px] text-[#3c3f41]">
          <Cube className="size-[10px]" />
          <span className="ml-[4px] whitespace-nowrap">chapa acanala</span>
        </div>
      </nav>
      <div className="flex h-[57px] shrink-0 overflow-hidden border-b border-[#dddfe0] bg-[#f0f2f3]">
        <Design className="ml-[6px] mt-[7px] h-[41px] w-[74px] tracking-[-0.450px]" />
        <div className="flex flex-col">
          <Tabs
            className="h-[18px] grid-cols-[59px_75px_55px_56px_69px_71px_75px_47px] pl-[19px] pt-px leading-[15px] tracking-[-0.350px]"
            activeClass="-mt-px h-[16px]"
          />
          <div className="flex pl-[6.500px]">
            <Group icons={create} label="CREAR" cell={cell} icon={icon} labelClass={label} />
            <Sep className="ml-[3px] mr-[4px] h-[34px]" />
            <Group icons={modify} label="MODIFICAR" cell={cell} icon={icon} labelClass={label} />
            <Sep className="ml-[3px] mr-[3.500px] h-[34px]" />
            <Group icons={constrain} label="RESTRICCIONES" cell={cell} icon={icon} labelClass={label} />
            <Sep className="ml-[3px] mr-[7px] h-[34px]" />
            <Group icons={["box", "table"]} label="CONFIGURAR" cell={cell} icon={icon} labelClass={label} />
          </div>
        </div>
      </div>
      <main className="relative h-[397px] shrink-0">
        <LeftCanvas />
        <aside className="relative flex w-[210px] flex-col pl-px pt-[3px] text-[#45484a]">
          <PanelHeader title="NAVEGADOR" arrows lead="w-[14px] pl-[1px]" className="mb-[2.500px] h-[16px] w-[200px] pl-[2px]" />
          <div className="flex h-[16px] items-center pl-[12px]">
            <Expander open />
            <Eye on className="ml-[9px] h-[7px] w-[10px]" />
            <div className="ml-[4px] flex h-[11px] w-[141px] items-center whitespace-nowrap bg-[#8a8d8e] font-bold tracking-[-0.280px] text-white">
              <svg viewBox="0 0 10 10" className="ml-[3px] size-[9px]"><path d="M0 2L2 0H10V8L8 10H0Z" fill="#e6eaf2" /><path d="M8 2V10L10 8V0Z" fill="#aeb5c4" /></svg>
              <span className="ml-[10px]">chapa acanalada param 15 dic ...</span>
            </div>
            <svg viewBox="0 0 10 10" className="ml-[2px] size-[10px]" fill="none"><circle cx="5" cy="5" r="4.300" stroke="#888b8d" fill="#fff" /><circle cx="5" cy="5" r="1.900" fill="#333" /></svg>
          </div>
          {nodes.map((n) => <TreeRow key={n.label} node={n} />)}
        </aside>
      </main>
    </section>
  );
}

function RightWindow() {
  const cell = "w-[25.900px]";
  const icon = "size-[20px]";
  const label = "pt-[3px] tracking-[-0.500px]";
  return (
    <section className="flex h-[486px] w-[904px] shrink-0 flex-col overflow-hidden text-[7.800px] leading-[10px] tracking-[-0.350px]">
      <header className="flex h-[6px] shrink-0 items-start overflow-hidden bg-[#f1f4f5]">
        <div className="h-[4px] w-[3px] bg-[#d9703c]" />
        <h1 className="-mt-[5px] ml-[4px] whitespace-nowrap font-['Open_Sans',sans-serif] text-[7.300px] leading-[9px] tracking-[-0.350px] text-[#85888a]">
          chapa acanalada param 15 dic v5* (efdi 2024) - Autodesk Fusion (Licencia educativa)
        </h1>
      </header>
      <nav className="flex h-[19px] shrink-0 items-end bg-[#c6c8c8]">
        <div className="flex w-[110px] shrink-0 justify-end overflow-hidden">
          <QuickAccess className="h-[18.200px] w-[116.600px]" />
        </div>
        <Home className="h-[16px] w-[23px]" />
        <div className="ml-[3px] flex h-[16px] w-[323px] shrink-0 items-center bg-[#b3b5b5] pl-[103px] pt-px font-['Open_Sans',sans-serif] tracking-[-0.420px] text-[#5d6062]">
          <Cube className="size-[9px]" />
          <span className="ml-[3px] whitespace-nowrap">completo 15dicparametrico v1*</span>
          <Close className="ml-auto mr-[4px]" />
        </div>
        <div className="ml-[3px] flex h-[16px] w-[325px] shrink-0 items-center rounded-t-[2px] bg-[#f1f3f4] pl-[97px] pt-px font-['Open_Sans',sans-serif] tracking-[-0.420px] text-[#3c3f41]">
          <Cube className="size-[9px]" />
          <span className="ml-[4px] whitespace-nowrap">chapa acanalada param 15 dic v5*</span>
          <Close className="ml-auto mr-[4px]" />
        </div>
        <svg viewBox="1483 9 117 16" className="h-[16px] w-[117px] shrink-0" fill="none">
          <path d="M1485 9.500H1502V24.500H1485Z" fill="#babcbc" />
          <path d="M1494 13V21M1490 17H1498" stroke="#66696b" strokeWidth="1.500" />
          <circle cx="1514" cy="15.800" r="4" stroke="#55585a" strokeWidth="1.500" /><path d="M1511 13l3-1 1 3-3 2z" fill="#55585a" />
          <circle cx="1534" cy="16" r="4.800" fill="#55585a" /><path d="M1534 13.500V16.300H1536.500" stroke="#d5d6d6" />
          <path d="M1549.800 19H1558.200L1557 17V14.500C1557 11 1551 11 1551 14.500V17ZM1552.800 19.700H1555.200V20.800H1552.800Z" fill="#55585a" />
          <circle cx="1574" cy="16" r="5" fill="#55585a" />
          <path d="M1572.300 14.500C1572.300 12.500 1575.700 12.500 1575.700 14.500C1575.700 15.800 1574 15.800 1574 17.200M1574 18.200V19.300" stroke="#dfe0e0" strokeWidth="1.100" />
          <circle cx="1598" cy="16" r="7" fill="#f1f2f3" />
          <text x="1593.800" y="18.600" fontSize="6.500" letterSpacing="-.3" fill="#55585a" fontFamily="Liberation Sans, sans-serif">AE</text>
        </svg>
      </nav>
      <div className="flex h-[50px] shrink-0 overflow-hidden border-b border-[#d6d8d9] bg-[#f0f2f3]">
        <Design className="mt-[6px] h-[38px] w-[66px] tracking-[-0.600px]" />
        <div className="flex flex-col">
          <Tabs
            className="h-[17px] grid-cols-[53px_67.500px_50px_50px_62px_65px_67px_43px] pl-[17.500px] pt-px leading-[13px] tracking-[-0.480px]"
            activeClass="-mt-px h-[14px]"
          />
          <div className="flex pl-[5px]">
            <Group icons={create} label="CREAR" cell={cell} icon={icon} labelClass={label} />
            <Sep className="ml-[3px] mr-[3px] h-[31px]" />
            <Group icons={modify} label="MODIFICAR" cell={cell} icon={icon} labelClass={label} />
            <Sep className="ml-[2.500px] mr-[3px] h-[31px]" />
            <Group icons={constrain} label="RESTRICCIONES" cell={cell} icon={icon} labelClass={label} dim={["fix", "parallel", "cross", "triangle"]} />
            <Sep className="ml-[2px] mr-[7px] h-[31px]" />
            <Group icons={["box", "table"]} label="CONFIGURAR" cell={cell} icon={icon} labelClass={label} className="w-[52px]" />
            <Sep className="ml-[6px] h-[31px]" />
            <Group icons={["measure"]} label="INSPECCIONAR" cell={cell} icon={icon} labelClass={label} className="w-[71px]" />
            <Sep className="h-[31px]" />
            <Group icons={["bolt", "image"]} label="INSERTAR" cell={cell} icon={icon} labelClass={label} className="w-[58px]" />
            <Sep className="h-[31px]" />
            <Group icons={["select"]} label="SELECCIONAR" cell={cell} icon={icon} labelClass={label} className="w-[70px]" />
            <div className="-mt-[3px] flex h-[36px] w-[82px] justify-center bg-[#cde9f2] pt-[3px]">
              <Group icons={["check"]} label="TERMINAR BOCETO" cell={cell} icon={icon} labelClass={label} />
            </div>
          </div>
        </div>
      </div>
      <main className="relative h-[378px] shrink-0 overflow-hidden">
        <RightCanvas />
        <aside className="relative flex h-[375px] w-[177px] flex-col pt-[4px] text-[7.600px] tracking-[-0.180px] text-[#45484a]">
          <PanelHeader title="NAVEGADOR" arrows lead="w-[11px]" className="-ml-px h-[14px] w-[177px]" />
          <div className="mt-[2.500px] border-l-[1.500px] border-[#a3a5a6] leading-[9px]">
            {sketches.map(([label, locked, w]) => (
              <div key={label} className="flex h-[14.410px] items-center pl-[37.500px]">
                <div className={`flex h-[12px] items-center bg-[#f0f1f2] pl-[2px] ${w}`}>
                  <Eye on={false} className="mr-[5px] h-[6px] w-[9px]" />
                  <SketchIcon locked={locked} />
                  <span className="ml-[8.500px]">{label}</span>
                </div>
              </div>
            ))}
            <div className="flex h-[14.410px] items-center pl-[37.500px]">
              <div className="flex h-[12px] items-center bg-[#f0f1f2] pl-[2px]">
                <Eye on className="mr-[4px] h-[6px] w-[9px]" />
                <span className="flex h-[12px] w-[15px] items-end justify-end bg-[#0d86c9] pb-[2px] pr-[4px]">
                  <svg viewBox="0 0 5 4" className="h-[4px] w-[5px]"><path d="M.5 3.500L4 .5" stroke="#d9c05a" strokeWidth="1.200" /></svg>
                </span>
                <span className="flex h-[12px] w-[42px] items-center bg-[#7d8082] pl-[5px] font-bold text-white">Boceto25</span>
              </div>
            </div>
            <div className="flex h-[14.410px] items-center pl-[15.500px]">
              <Expander open={false} />
              <div className="ml-[5px] flex h-[12px] w-[79px] items-center bg-[#f0f1f2] pl-[2px]">
                <Eye on className="h-[6px] w-[9px]" />
                <Folder className="ml-[6px] mr-[7px] h-[8px] w-[10px]" />
                Construcción
              </div>
            </div>
          </div>
          <PanelHeader title="COMENTARIOS" lead="w-[11px]" className="-ml-px mt-auto h-[15px] w-[177px]" />
        </aside>
        <Palette />
        <div className="absolute left-[592px] top-[288px] flex h-[13px] w-[90px] items-center bg-[#eceeef] font-['Open_Sans',sans-serif] text-[7.300px] tracking-[-0.350px] text-[#45484a]">
          <div className="ml-[8px] flex h-[11px] w-[42px] items-center justify-between overflow-hidden whitespace-nowrap border border-[#d5d7d8] bg-white pr-[3px]">
            <span>up_eje / 2</span>
            <Fx />
          </div>
          <span className="w-[15px] text-center font-bold">⋮</span>
          <div className="flex h-[11px] w-[25px] items-center border border-[#d5d7d8] bg-white pl-[1px] font-['Liberation_Sans',sans-serif]">filas</div>
        </div>
        <PatternDialog />
        <NavBar />
        <div className="absolute left-[657px] top-[363px] flex h-[13px] w-[247px] items-center whitespace-nowrap font-['Open_Sans',sans-serif] text-[7.800px] tracking-[-0.350px] text-[#2f3234]">
          <span className="flex h-[13px] w-[154px] items-center bg-[#f3f4f4] pl-[4px]">Seleccione las curvas de boceto para el patrón.</span>
          <span className="w-[86px] pb-[3px] pl-[2px] text-[7px] font-bold tracking-[-0.370px]">ceto | Diámetro : 8.00 mm</span>
          <svg viewBox="0 0 9 9" className="mb-[3px] ml-[2px] size-[9px] shrink-0"><circle cx="4.500" cy="4.500" r="4.500" fill="#2b2d2e" /><path d="M2.500 5.500L4.500 3.500L6.500 5.500" stroke="#fff" fill="none" /></svg>
        </div>
      </main>
      <div className="flex h-[4px] shrink-0 bg-[#ededee]">
        <div className="ml-[301px] flex-1 bg-[#c8cac9]" />
      </div>
    </section>
  );
}

export default function App() {
  return (
    <div className="flex h-[486px] w-[1600px] gap-[5px] overflow-hidden bg-[#fdfefe] font-['Liberation_Sans',Arial,sans-serif] [text-rendering:geometricPrecision]">
      <LeftWindow />
      <RightWindow />
    </div>
  );
}
